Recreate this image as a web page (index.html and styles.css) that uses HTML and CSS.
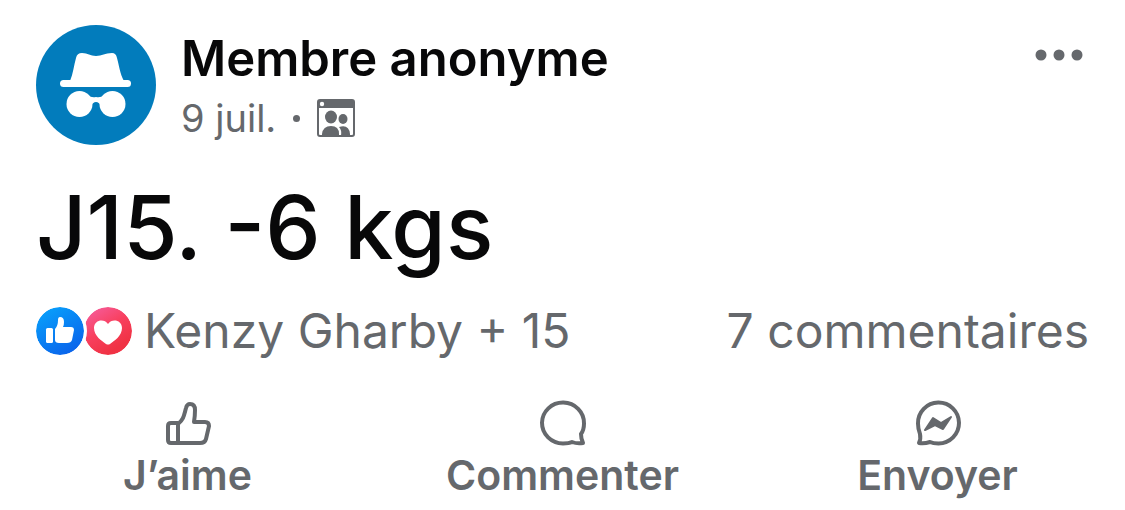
FILE: index.html
```html
<!doctype html>
<html lang="fr">
<head>
<title>Membre anonyme</title>
<meta charset="utf-8">
<meta name="viewport" content="width=device-width, initial-scale=1">
<link rel="stylesheet" href="styles.css">
</head>
<body>

<article class="post">

	<header class="post-header">
		<svg class="avatar" viewBox="0 0 120 120" aria-hidden="true">
			<circle cx="60" cy="60" r="60" fill="#027cbc"/>
			<g fill="#fff">
				<path d="M34 56 C37 49 38 40 40 33 Q41 28 46 28 C52 28 54 31 60 31 C66 31 69 28 76 28 Q80 28 81 33 C83 40 84 49 88 56 Z"/>
				<rect x="24" y="55" width="71" height="7" rx="3.500"/>
				<circle cx="43.500" cy="79" r="13"/>
				<circle cx="76.500" cy="79" r="13"/>
				<path d="M52 70 Q55 73 60 72 Q65 73 68 70 L66 82 Q63 77 60 77 Q57 77 54 82 Z"/>
			</g>
		</svg>

		<div class="byline">
			<h1 class="author">Membre anonyme</h1>
			<div class="meta">
				<span>9 juil.</span>
				<span class="dot"></span>
				<svg class="group" viewBox="0 0 38 38" aria-hidden="true">
					<rect x="1" y="1" width="36" height="36" rx="2" fill="#fff" stroke="#65686c" stroke-width="2"/>
					<path d="M1 1H37V9H1Z" fill="#65686c"/>
					<circle cx="5" cy="5" r="2.200" fill="#fff"/>
					<g fill="#65686c">
						<ellipse cx="14" cy="18" rx="6" ry="6.500"/>
						<ellipse cx="26" cy="20" rx="4.500" ry="5"/>
						<path d="M5 37V35Q6 27 14 27Q22 27 22 35V37Z"/>
						<path d="M24 37Q25 31 22 28Q32 25 33 35V37Z"/>
					</g>
				</svg>
			</div>
		</div>

		<button class="more" aria-label="Plus d’options">
			<svg viewBox="0 0 48 12" aria-hidden="true">
				<circle cx="6" cy="6" r="5.500"/>
				<circle cx="24" cy="6" r="5.500"/>
				<circle cx="42" cy="6" r="5.500"/>
			</svg>
		</button>
	</header>

	<p class="message">J15. -6 kgs</p>

	<div class="counts">
		<a class="reactions" href="#">
			<svg class="like" viewBox="0 0 48 48" aria-hidden="true">
				<defs>
					<linearGradient id="blue" x1="0.200" y1="0" x2="0.800" y2="1">
						<stop offset="0" stop-color="#08a0fb"/>
						<stop offset="1" stop-color="#0a60ea"/>
					</linearGradient>
				</defs>
				<circle cx="24" cy="24" r="24" fill="url(#blue)"/>
				<g fill="#fff">
					<rect x="10" y="21" width="7" height="15" rx="1.500"/>
					<path d="M19 22 Q22 19 22 13 Q22 10 24 10 Q28 10 28 15 Q28 18 27 20 H35 Q38 20 38 23 L36 33 Q35 36 31 36 H23 Q19 36 19 33 Z"/>
				</g>
			</svg>
			<svg class="love" viewBox="0 0 48 48" aria-hidden="true">
				<defs>
					<linearGradient id="red" x1="0.100" y1="0.100" x2="0.600" y2="0.900">
						<stop offset="0" stop-color="#f65a96"/>
						<stop offset="0.500" stop-color="#f8405f"/>
						<stop offset="1" stop-color="#f03244"/>
					</linearGradient>
				</defs>
				<circle cx="24" cy="24" r="24" fill="url(#red)"/>
				<path fill="#fff" d="M24 17 C20 11 10 13 10 21 C10 29 18 34 22 37 Q24 38 26 37 C30 34 38 29 38 21 C38 13 28 11 24 17 Z"/>
			</svg>
			<span class="names">Kenzy Gharby + 15</span>
		</a>
		<a class="comments" href="#">7 commentaires</a>
	</div>

	<div class="actions">
		<button class="action">
			<svg viewBox="0 0 48 48" aria-hidden="true">
				<path d="M14 24H7Q4 24 4 27V41Q4 44 7 44H36Q41 44 42 40L45 27Q45 23 41 23H30C31 17 31 15 31 11Q31 5 26 5Q23 5 22 9C20 16 20 20 14 25V44"/>
			</svg>
			<span>J’aime</span>
		</button>
		<button class="action">
			<svg viewBox="0 0 48 48" aria-hidden="true">
				<path d="M42 35Q45 31 45 24.500A21 20.500 0 1 0 24 44.500Q30 44.500 33 43Q38 45 44 44Q42 40 42 35Z"/>
			</svg>
			<span>Commenter</span>
		</button>
		<button class="action">
			<svg viewBox="0 0 48 48" aria-hidden="true">
				<path d="M6 35Q4 30 4 24.500A20.500 20.500 0 1 1 24.500 44.500Q19 44.500 16 43Q10 45 5 44Q7 40 6 35Z"/>
				<path class="bolt" d="M11 31L19 19L27 24L37 18L29 30L21 26Z"/>
			</svg>
			<span>Envoyer</span>
		</button>
	</div>

</article>

</body>
</html>
```
FILE: styles.css
```css
* { margin: 0; padding: 0; box-sizing: border-box; }

body {
	background: #fff;
	color: #080809;
	font-family: Inter, "Liberation Sans", sans-serif;
}

a { color: inherit; text-decoration: none; }
button { border: none; background: none; font: inherit; color: inherit; }
svg { display: block; flex: none; }

.post { padding-top: 25px; }

.post-header {
	display: flex;
	align-items: flex-start;
	padding: 0 42px 0 36px;
}
.avatar { width: 120px; height: 120px; }
.byline { flex: 1; margin-left: 25px; }
.author {
	font-size: 49px;
	font-weight: 600;
	line-height: 68px;
}
.meta {
	display: flex;
	align-items: center;
	color: #65686c;
	font-size: 38px;
	line-height: 50px;
}
.dot {
	width: 7px; height: 7px;
	margin: 0 17px;
	border-radius: 50%;
	background: #65686c;
}
.group { width: 38px; height: 38px; }

.more { padding-top: 24px; }
.more svg { width: 48px; height: 12px; fill: #65686c; }

.message {
	padding: 0 36px;
	margin-top: 28px;
	font-size: 88px;
	font-weight: 500;
	line-height: 108px;
}

.counts {
	display: flex;
	justify-content: space-between;
	align-items: center;
	padding: 0 36px;
	margin-top: 20px;
	color: #65686c;
	font-size: 48px;
	line-height: 60px;
}
.reactions { display: flex; align-items: center; }
.like, .love { width: 48px; height: 48px; border-radius: 50%; }
.like { position: relative; box-shadow: 0 0 0 3px #fff; }
.names { margin-left: 12px; }

.actions {
	display: grid;
	grid-template-columns: repeat(3, 1fr);
	margin-top: 38px;
	color: #65686c;
}
.action {
	display: flex;
	flex-direction: column;
	align-items: center;
	font-size: 41px;
	font-weight: 600;
	line-height: 56px;
}
.action svg {
	width: 48px; height: 48px;
	fill: none;
	stroke: #65686c;
	stroke-width: 4;
	stroke-linejoin: round;
}
.action .bolt { fill: #65686c; stroke-width: 2; }
```
